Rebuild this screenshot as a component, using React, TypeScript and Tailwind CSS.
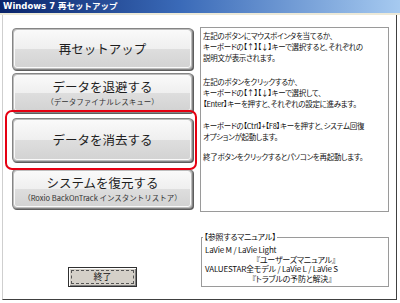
import React from "react";

function BigButton({ title, sub, className }: { title: string; sub?: string; className: string }) {
  return (
    <div className={"rounded-[4px] border border-[#858585] shadow-[1px_1px_0_#5e5e5e] bg-[#bdbdbd] p-[1px] " + className}>
      <div className="h-full rounded-[3px] border border-[#fafafa] bg-[linear-gradient(#f9f9f9,#efefef_50%,#dedede_50%,#d3d3d3)] flex flex-col items-center justify-center text-[#1e1e1e]">
        <div className="text-[12.5px] leading-[14px]">{title}</div>
        {sub && <div className="text-[7.5px] leading-[9px] text-[#333] mt-[3px]">{sub}</div>}
      </div>
    </div>
  );
}

export default function App() {
  return (
    <div className="w-[400px] h-[303px] bg-white overflow-hidden relative font-['Noto_Sans_CJK_JP','Noto_Sans',sans-serif]">
      <div className="h-[13px] bg-[linear-gradient(90deg,#0a246a,#3a6ab8_45%,#a6caf0)] text-white font-bold text-[8.5px] leading-[13px] pl-[3px] font-['DejaVu_Sans','Noto_Sans_CJK_JP',sans-serif]">
        Windows 7 再セットアップ
      </div>
      <div className="h-[2px] bg-[#ece9d8]"></div>
      <div className="h-[285px] ml-[2px] mr-[3px] border-l border-[#cfcfcf] border-r border-r-[#404040] border-b border-b-[#404040] flex">
        <div className="w-[197px] flex flex-col pl-[9px] pt-[13px]">
          <BigButton title="再セットアップ" className="w-[181px] h-[42px]" />
          <BigButton title="データを退避する" sub="（データファイナルレスキュー）" className="w-[181px] h-[40px] mt-[3px]" />
          <BigButton title="データを消去する" className="w-[181px] h-[44px] mt-[5px]" />
          <BigButton title="システムを復元する" sub="（Roxio BackOnTrack インスタントリストア）" className="w-[181px] h-[40px] mt-[7px]" />
          <div className="mt-[58px] ml-[56px] w-[69px] h-[20px] bg-[#d4d0c8] border border-[#303030] shadow-[inset_1px_1px_0_#fff,inset_-1px_-1px_0_#808080] p-[2px]">
            <div className="h-full border border-dashed border-[#555] flex items-center justify-center text-[9px] text-[#111]">終了</div>
          </div>
        </div>
        <div className="flex flex-col pt-[12px]">
          <div className="w-[189px] h-[185px] border border-[#9a9a9a] pl-[2px] pt-[2px] text-[7.5px] leading-[11px] text-[#111] tracking-[-0.3px] [font-feature-settings:'palt']">
            <p>左記のボタンにマウスポインタを当てるか、</p>
            <p>キーボードの【↑】【↓】キーで選択すると、それぞれの</p>
            <p>説明文が表示されます。</p>
            <p className="mt-[13px]">左記のボタンをクリックするか、</p>
            <p>キーボードの【↑】【↓】キーで選択して、</p>
            <p>【Enter】キーを押すと、それぞれの設定に進みます。</p>
            <p className="mt-[11px]">キーボードの【Ctrl】+【F8】キーを押すと、システム回復</p>
            <p>オプションが起動します。</p>
            <p className="mt-[9px]">終了ボタンをクリックするとパソコンを再起動します。</p>
          </div>
          <div className="mt-[25px] ml-[1px] w-[188px] h-[50px] border border-[#9a9a9a] relative px-[3px] pt-[7px] text-[8px] leading-[9.5px] text-[#111] tracking-[-0.2px] [font-feature-settings:'palt']">
            <div className="absolute -top-[6px] left-[1px] bg-white px-[1px] leading-[10px]">【参照するマニュアル】</div>
            <p>LaVie M / LaVie Light</p>
            <p className="pl-[51px]">『ユーザーズマニュアル』</p>
            <p>VALUESTAR全モデル / LaVie L / LaVie S</p>
            <p className="pl-[47px]">『トラブルの予防と解決』</p>
          </div>
        </div>
      </div>
      <div className="absolute left-[5px] top-[110px] w-[192px] h-[60px] border-[2px] border-[#e60012] rounded-[7px]"></div>
    </div>
  );
}
